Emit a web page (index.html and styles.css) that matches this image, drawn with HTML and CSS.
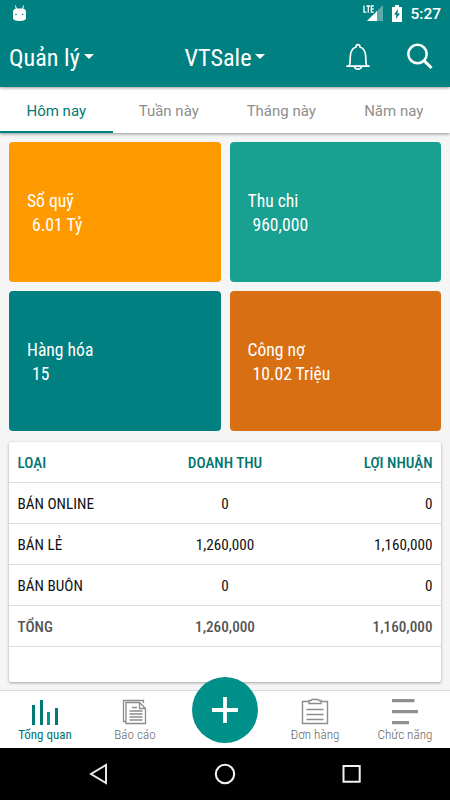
FILE: index.html
```html
<!DOCTYPE html>
<html lang="vi">
<head>
    <meta charset="UTF-8">
    <meta name="viewport" content="width=device-width, initial-scale=1.0">
    <title>VTSale</title>
    <link rel="stylesheet" href="styles.css">
</head>
<body>
    <div class="app">
        <header class="header">
            <div class="status-bar">
                <svg class="droid" width="15" height="18" viewBox="0 0 15 18">
                    <path d="M3.500 0.500l1 4M11.500 0.500l-1 4" stroke="#fff" stroke-width="1"/>
                    <path d="M1 7Q1 3.500 5 3.500h5Q14 3.500 14 7v6Q14 16 7.500 16T1 13z" fill="#fff"/>
                    <circle cx="4" cy="9.500" r=".8" fill="#008080"/>
                    <circle cx="10.500" cy="9.500" r=".8" fill="#008080"/>
                </svg>
                <div class="status-icons">
                    <svg width="21" height="17" viewBox="0 0 21 17">
                        <path d="M20 0v16H4z" fill="#5aabab"/>
                        <path d="M14 6v10H4z" fill="#fff"/>
                        <path d="M0 0h12v8.500H0z" fill="#008080"/>
                        <path d="M1 .5v6.700h2.500M3.500 1h3.500M5.300 1v6.700M10.800 1H8.300v6.200h2.500M8.300 4h2.300" fill="none" stroke="#fff" stroke-width="1.300"/>
                    </svg>
                    <svg class="battery" width="10" height="17" viewBox="0 0 10 17">
                        <path d="M3 0h4v2h3v15H0V2h3z" fill="#fff"/>
                        <path d="M6 4L2 9.500h2.300L4 14l4-5.500H5.500z" fill="#008080"/>
                    </svg>
                    <span class="clock">5:27</span>
                </div>
            </div>
            <div class="toolbar">
                <div class="dropdown">Quản lý<span class="caret"></span></div>
                <div class="dropdown shop">VTSale<span class="caret"></span></div>
                <div class="actions">
                    <svg width="26" height="28" viewBox="0 0 26 28" fill="none" stroke="#fff" stroke-width="1.700">
                        <path d="M2 23.200h22M4 23c1.500-2 1-5.500 1.300-10C5.700 8 8.300 4.700 11 4c0-3.300 4-3.300 4 0 2.700.7 5.300 4 5.700 9 .3 4.500-.2 8 1.300 10M9.500 23.500c.5 3.500 6.500 3.500 7 0" stroke-linecap="round"/>
                    </svg>
                    <svg width="28" height="28" viewBox="0 0 28 28" fill="none" stroke="#fff" stroke-width="2.500">
                        <circle cx="11.500" cy="11" r="9.200"/>
                        <path d="M18 17.600l7.500 7.400" stroke-width="3"/>
                    </svg>
                </div>
            </div>
        </header>

        <nav class="tabs">
            <a class="tab active">Hôm nay</a>
            <a class="tab">Tuần này</a>
            <a class="tab">Tháng này</a>
            <a class="tab">Năm nay</a>
        </nav>

        <main class="content">
            <div class="cards">
                <div class="card orange"><span>Sổ quỹ</span><span class="value">6.01 Tỷ</span></div>
                <div class="card green"><span>Thu chi</span><span class="value">960,000</span></div>
                <div class="card teal"><span>Hàng hóa</span><span class="value">15</span></div>
                <div class="card brown"><span>Công nợ</span><span class="value">10.02 Triệu</span></div>
            </div>

            <div class="report">
                <div class="row head"><span>LOẠI</span><span>DOANH THU</span><span>LỢI NHUẬN</span></div>
                <div class="row"><span>BÁN ONLINE</span><span>0</span><span>0</span></div>
                <div class="row"><span>BÁN LẺ</span><span>1,260,000</span><span>1,160,000</span></div>
                <div class="row"><span>BÁN BUÔN</span><span>0</span><span>0</span></div>
                <div class="row total"><span>TỔNG</span><span>1,260,000</span><span>1,160,000</span></div>
            </div>
        </main>

        <nav class="bottom-nav">
            <a class="nav-item active">
                <svg width="28" height="28" viewBox="0 0 28 28">
                    <path d="M1 7h3v20H1zM9 2h3v25H9zM24 10h3v17h-3z" fill="#007a76"/>
                    <path d="M16 14h3v13h-3z" fill="#00968f"/>
                </svg>
                <span>Tổng quan</span>
            </a>
            <a class="nav-item">
                <svg width="28" height="28" viewBox="0 0 28 28" fill="none" stroke="#8c8c8c" stroke-width="1.300">
                    <path d="M5 23.500H2.500V2.500h20V5"/>
                    <path d="M5 4.500H18.500l6 6v15H5zM18.500 4.500v6h6"/>
                    <path d="M11 9.500h5M8.500 13H21.500M8.500 16H21.500M8.500 19H21.500M8.500 22H21.500"/>
                </svg>
                <span>Báo cáo</span>
            </a>
            <a class="nav-item add">
                <span class="fab">
                    <svg width="28" height="28" viewBox="0 0 28 28"><path d="M14 1v26M1 14h26" stroke="#fff" stroke-width="3.800"/></svg>
                </span>
            </a>
            <a class="nav-item">
                <svg width="28" height="28" viewBox="0 0 28 28" fill="none" stroke="#8c8c8c" stroke-width="1.400">
                    <path d="M7.500 3.500h-6v22h25v-22h-6"/>
                    <path d="M8 5.500v-3h2l1-1h6l1 1h2v3zM5.500 11.500h17M5.500 16.500h17M5.500 21.500h17"/>
                </svg>
                <span>Đơn hàng</span>
            </a>
            <a class="nav-item">
                <svg width="28" height="28" viewBox="0 0 28 28">
                    <path d="M1 1h22.500v3.200H1zM1 12h26v3.200H1zM1 23h17v3.200H1z" fill="#8f8f8f"/>
                </svg>
                <span>Chức năng</span>
            </a>
        </nav>

        <div class="system-bar">
            <svg width="22" height="22" viewBox="0 0 22 22"><path d="M19 2v18L4 11z" fill="none" stroke="#e8e8e8" stroke-width="2"/></svg>
            <svg width="22" height="22" viewBox="0 0 22 22"><circle cx="11" cy="11" r="9.200" fill="none" stroke="#f2f2f2" stroke-width="2.100"/></svg>
            <svg width="22" height="22" viewBox="0 0 22 22"><path d="M2.500 3h16.200v15.800H2.500z" fill="none" stroke="#f2f2f2" stroke-width="2"/></svg>
        </div>
    </div>
</body>
</html>
```
FILE: styles.css
```css
* {
    box-sizing: border-box;
}
body {
    margin: 0;
    font-family: "Roboto Condensed", Roboto, sans-serif;
    font-stretch: 75%;
    background-color: #f5f5f5;
}
.app {
    display: flex;
    flex-direction: column;
    height: 800px;
}
svg {
    display: block;
}

/* header */
.header {
    height: 87px;
    background-color: #008080;
    color: #fff;
    box-shadow: 0 1px 3px rgba(0, 0, 0, 0.4);
    z-index: 2;
}
.status-bar {
    display: flex;
    justify-content: space-between;
    align-items: center;
    height: 27px;
    padding: 0 9px 0 12px;
}
.status-icons {
    display: flex;
    align-items: center;
}
.battery {
    margin: 0 8px 0 8px;
}
.clock {
    font: 500 15.5px/28px Roboto, sans-serif;
}
.toolbar {
    display: grid;
    grid-template-columns: 1fr 1fr 1fr;
    align-items: center;
    height: 60px;
    padding: 0 9px;
}
.dropdown {
    display: flex;
    align-items: center;
    padding-top: 1px;
    font-size: 24.2px;
}
.shop {
    justify-content: center;
}
.caret {
    margin: -3px 0 0 4px;
    border: 5px solid transparent;
    border-top: 5px solid #fff;
    border-bottom: 0;
}
.actions {
    display: flex;
    justify-content: flex-end;
    gap: 35px;
    padding-right: 7px;
}

/* tabs */
.tabs {
    display: flex;
    height: 46px;
    background-color: #fff;
    box-shadow: 0 1px 3px rgba(0, 0, 0, 0.4);
    z-index: 1;
}
.tab {
    flex: 1;
    border-bottom: 2px solid transparent;
    font: 15px/48px Roboto, sans-serif;
    text-align: center;
    color: #8e8e8e;
}
.tab.active {
    color: #007a74;
    border-bottom-color: #008080;
}

/* summary cards */
.content {
    height: 557px;
    padding: 9px;
}
.cards {
    display: grid;
    grid-template-columns: 1fr 1fr;
    grid-auto-rows: 140px;
    gap: 9px;
}
.card {
    display: flex;
    flex-direction: column;
    justify-content: center;
    padding: 1px 18px 0;
    border-radius: 4px;
    font-size: 17.6px;
    line-height: 24px;
    color: #fff;
}
.value {
    padding-left: 5px;
}
.orange {
    background-color: #ff9900;
}
.green {
    background-color: #18a090;
}
.teal {
    background-color: #008080;
}
.brown {
    background-color: #d87013;
}

/* report table */
.report {
    height: 240px;
    margin-top: 11px;
    background-color: #fff;
    border-radius: 2px;
    box-shadow: 0 1px 3px rgba(0, 0, 0, 0.35);
}
.row {
    display: grid;
    grid-template-columns: 1fr 1fr 1fr;
    height: 41px;
    padding: 0 8.5px;
    border-bottom: 1px solid #ddd;
    font-size: 15.2px;
    line-height: 42px;
    color: #111;
}
.row span:nth-child(2) {
    text-align: center;
}
.row span:last-child {
    text-align: right;
}
.head {
    font-weight: 500;
    color: #007570;
}
.total {
    font-weight: 500;
    color: #555;
}

/* bottom navigation */
.bottom-nav {
    display: flex;
    height: 58px;
    background-color: #fff;
    border-top: 1px solid #d8d8d8;
}
.nav-item {
    flex: 1;
    display: flex;
    flex-direction: column;
    align-items: center;
    padding-top: 7px;
    font-size: 13.2px;
    font-weight: 300;
    line-height: 18px;
    color: #666;
}
.nav-item.active {
    font-size: 13px;
    font-weight: 400;
    color: #00736d;
}
.fab {
    display: flex;
    align-items: center;
    justify-content: center;
    width: 66px;
    height: 66px;
    margin-top: -21px;
    border-radius: 50%;
    background-color: #00908a;
}

/* android buttons */
.system-bar {
    display: flex;
    justify-content: center;
    align-items: center;
    gap: 105px;
    height: 52px;
    background-color: #000;
}
```
